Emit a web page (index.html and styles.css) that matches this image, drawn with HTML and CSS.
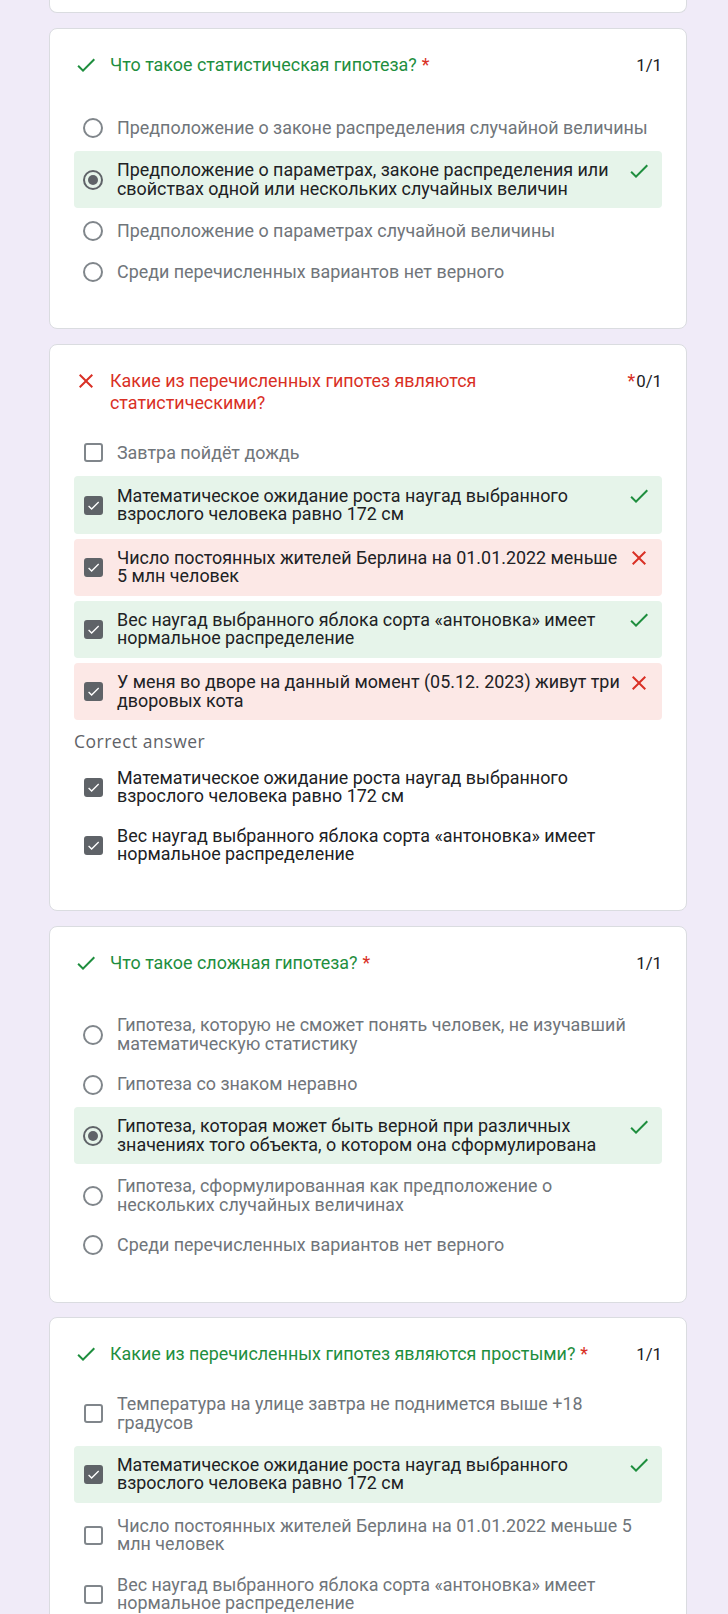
FILE: index.html
```html
<!DOCTYPE html>
<html lang="ru">
<head>
<meta charset="utf-8">
<title>Результаты теста</title>
<link rel="stylesheet" href="styles.css">
</head>
<body>
<main class="page">
  <div class="card card-stub"></div>

  <section class="card">
    <header class="q-head">
      <svg class="q-icon ok" viewBox="0 0 24 24"><path d="M9 16.17L4.83 12l-1.42 1.41L9 19 21 7l-1.41-1.41z"/></svg>
      <div class="q-title ok">Что такое статистическая гипотеза?</div>
      <span class="req">*</span>
      <span class="score">1/1</span>
    </header>
    <ul class="opts radio-list">
      <li class="opt"><span class="ctl"><span class="radio"></span></span><span class="txt">Предположение о законе распределения случайной величины</span></li>
      <li class="opt chosen good"><span class="ctl"><span class="radio on"></span></span><span class="txt">Предположение о параметрах, законе распределения или свойствах одной или нескольких случайных величин</span><svg class="mark ok" viewBox="0 0 24 24"><path d="M9 16.17L4.83 12l-1.42 1.41L9 19 21 7l-1.41-1.41z"/></svg></li>
      <li class="opt"><span class="ctl"><span class="radio"></span></span><span class="txt">Предположение о параметрах случайной величины</span></li>
      <li class="opt"><span class="ctl"><span class="radio"></span></span><span class="txt">Среди перечисленных вариантов нет верного</span></li>
    </ul>
  </section>

  <section class="card">
    <header class="q-head">
      <svg class="q-icon bad" viewBox="0 0 24 24"><path d="M19 6.41L17.59 5 12 10.59 6.41 5 5 6.41 10.59 12 5 17.59 6.41 19 12 13.41 17.59 19 19 17.59 13.41 12z"/></svg>
      <div class="q-title bad">Какие из перечисленных гипотез являются статистическими?</div>
      <span class="req">*</span>
      <span class="score">0/1</span>
    </header>
    <ul class="opts check-list">
      <li class="opt"><span class="ctl"><span class="cb"></span></span><span class="txt">Завтра пойдёт дождь</span></li>
      <li class="opt chosen good"><span class="ctl"><span class="cb on"><svg viewBox="0 0 24 24"><path d="M9 16.17L4.83 12l-1.42 1.41L9 19 21 7l-1.41-1.41z"/></svg></span></span><span class="txt">Математическое ожидание роста наугад выбранного взрослого человека равно 172 см</span><svg class="mark ok" viewBox="0 0 24 24"><path d="M9 16.17L4.83 12l-1.42 1.41L9 19 21 7l-1.41-1.41z"/></svg></li>
      <li class="opt chosen wrong"><span class="ctl"><span class="cb on"><svg viewBox="0 0 24 24"><path d="M9 16.17L4.83 12l-1.42 1.41L9 19 21 7l-1.41-1.41z"/></svg></span></span><span class="txt">Число постоянных жителей Берлина на 01.01.2022 меньше 5 млн человек</span><svg class="mark bad" viewBox="0 0 24 24"><path d="M19 6.41L17.59 5 12 10.59 6.41 5 5 6.41 10.59 12 5 17.59 6.41 19 12 13.41 17.59 19 19 17.59 13.41 12z"/></svg></li>
      <li class="opt chosen good"><span class="ctl"><span class="cb on"><svg viewBox="0 0 24 24"><path d="M9 16.17L4.83 12l-1.42 1.41L9 19 21 7l-1.41-1.41z"/></svg></span></span><span class="txt">Вес наугад выбранного яблока сорта «антоновка» имеет нормальное распределение</span><svg class="mark ok" viewBox="0 0 24 24"><path d="M9 16.17L4.83 12l-1.42 1.41L9 19 21 7l-1.41-1.41z"/></svg></li>
      <li class="opt chosen wrong"><span class="ctl"><span class="cb on"><svg viewBox="0 0 24 24"><path d="M9 16.17L4.83 12l-1.42 1.41L9 19 21 7l-1.41-1.41z"/></svg></span></span><span class="txt">У меня во дворе на данный момент (05.12. 2023) живут три дворовых кота</span><svg class="mark bad" viewBox="0 0 24 24"><path d="M19 6.41L17.59 5 12 10.59 6.41 5 5 6.41 10.59 12 5 17.59 6.41 19 12 13.41 17.59 19 19 17.59 13.41 12z"/></svg></li>
    </ul>
    <div class="answer-label">Correct answer</div>
    <ul class="opts answer-list">
      <li class="opt chosen"><span class="ctl"><span class="cb on"><svg viewBox="0 0 24 24"><path d="M9 16.17L4.83 12l-1.42 1.41L9 19 21 7l-1.41-1.41z"/></svg></span></span><span class="txt">Математическое ожидание роста наугад выбранного взрослого человека равно 172 см</span></li>
      <li class="opt chosen"><span class="ctl"><span class="cb on"><svg viewBox="0 0 24 24"><path d="M9 16.17L4.83 12l-1.42 1.41L9 19 21 7l-1.41-1.41z"/></svg></span></span><span class="txt">Вес наугад выбранного яблока сорта «антоновка» имеет нормальное распределение</span></li>
    </ul>
  </section>

  <section class="card">
    <header class="q-head">
      <svg class="q-icon ok" viewBox="0 0 24 24"><path d="M9 16.17L4.83 12l-1.42 1.41L9 19 21 7l-1.41-1.41z"/></svg>
      <div class="q-title ok">Что такое сложная гипотеза?</div>
      <span class="req">*</span>
      <span class="score">1/1</span>
    </header>
    <ul class="opts radio-list">
      <li class="opt"><span class="ctl"><span class="radio"></span></span><span class="txt">Гипотеза, которую не сможет понять человек, не изучавший математическую статистику</span></li>
      <li class="opt"><span class="ctl"><span class="radio"></span></span><span class="txt">Гипотеза со знаком неравно</span></li>
      <li class="opt chosen good"><span class="ctl"><span class="radio on"></span></span><span class="txt">Гипотеза, которая может быть верной при различных значениях того объекта, о котором она сформулирована</span><svg class="mark ok" viewBox="0 0 24 24"><path d="M9 16.17L4.83 12l-1.42 1.41L9 19 21 7l-1.41-1.41z"/></svg></li>
      <li class="opt"><span class="ctl"><span class="radio"></span></span><span class="txt">Гипотеза, сформулированная как предположение о нескольких случайных величинах</span></li>
      <li class="opt"><span class="ctl"><span class="radio"></span></span><span class="txt">Среди перечисленных вариантов нет верного</span></li>
    </ul>
  </section>

  <section class="card">
    <header class="q-head">
      <svg class="q-icon ok" viewBox="0 0 24 24"><path d="M9 16.17L4.83 12l-1.42 1.41L9 19 21 7l-1.41-1.41z"/></svg>
      <div class="q-title ok">Какие из перечисленных гипотез являются простыми?</div>
      <span class="req">*</span>
      <span class="score">1/1</span>
    </header>
    <ul class="opts check-list">
      <li class="opt"><span class="ctl"><span class="cb"></span></span><span class="txt">Температура на улице завтра не поднимется выше +18 градусов</span></li>
      <li class="opt chosen good"><span class="ctl"><span class="cb on"><svg viewBox="0 0 24 24"><path d="M9 16.17L4.83 12l-1.42 1.41L9 19 21 7l-1.41-1.41z"/></svg></span></span><span class="txt">Математическое ожидание роста наугад выбранного взрослого человека равно 172 см</span><svg class="mark ok" viewBox="0 0 24 24"><path d="M9 16.17L4.83 12l-1.42 1.41L9 19 21 7l-1.41-1.41z"/></svg></li>
      <li class="opt"><span class="ctl"><span class="cb"></span></span><span class="txt">Число постоянных жителей Берлина на 01.01.2022 меньше 5 млн человек</span></li>
      <li class="opt"><span class="ctl"><span class="cb"></span></span><span class="txt">Вес наугад выбранного яблока сорта «антоновка» имеет нормальное распределение</span></li>
      <li class="opt"><span class="ctl"><span class="cb"></span></span><span class="txt">У меня во дворе на данный момент (05.12. 2023) живут три дворовых кота</span></li>
    </ul>
  </section>
</main>
</body>
</html>
```

FILE: styles.css
```css
* { box-sizing: border-box; }

html, body {
  margin: 0;
  padding: 0;
  background: #f0ebf8;
}

body {
  font-family: Roboto, "Noto Sans", "Liberation Sans", sans-serif;
  color: #202124;
}

.page {
  width: 687px;
  padding: 0 0 40px 49px;
  display: flex;
  flex-direction: column;
  gap: 14.5px;
}

.card {
  background: #fff;
  border: 1px solid #dadce0;
  border-radius: 8px;
  padding: 25px 24px 37.5px;
}

.card-stub {
  height: 13px;
  padding: 0;
  border-top: none;
  border-radius: 0 0 8px 8px;
}

.q-head {
  display: flex;
  align-items: baseline;
}

.q-icon {
  flex: none;
  align-self: flex-start;
  width: 24px;
  height: 24px;
  margin-top: -1px;
  margin-right: 12px;
}

.q-icon.ok, .mark.ok { fill: #1e8e3e; }
.q-icon.bad, .mark.bad { fill: #d93025; }

.q-title {
  flex: 0 1 auto;
  min-width: 0;
  font-size: 17.9px;
  line-height: 22px;
}

.q-title.ok { color: #1e8e3e; }
.q-title.bad { color: #d93025; }

.req {
  flex: none;
  margin-left: 5px;
  color: #d93025;
  font-size: 17.9px;
  line-height: 22px;
}

.score {
  flex: none;
  margin-left: auto;
  padding-left: 1px;
  font-size: 16.8px;
  line-height: 22px;
  font-variant-numeric: tabular-nums;
  color: #202124;
}

.opts {
  list-style: none;
  margin: 0;
  padding: 0;
  display: flex;
  flex-direction: column;
}

.radio-list {
  margin-top: 33.2px;
  gap: 4.1px;
}

.check-list {
  margin-top: 20.5px;
  gap: 5px;
}

.answer-list {
  margin-top: 7px;
  gap: 4px;
}

.opt {
  display: flex;
  align-items: center;
  padding: 8.6px 11px 8.6px 9px;
  border-radius: 4px;
  font-size: 17.9px;
  line-height: 18.5px;
  color: #70757a;
}

.opt.chosen { color: #202124; }

.opt.good,
.opt.wrong {
  padding-top: 10.1px;
  padding-bottom: 10.1px;
}

.opt.good { background: #e6f4ea; }
.opt.wrong { background: #fce8e6; }

.ctl {
  flex: none;
  width: 20px;
  height: 20px;
  margin-right: 14px;
  display: flex;
  align-items: center;
  justify-content: center;
}

.txt {
  flex: 1 1 auto;
  min-width: 0;
}

.mark {
  flex: none;
  align-self: flex-start;
  width: 24px;
  height: 24px;
  margin-top: -2.5px;
  margin-left: 4px;
}

.radio {
  width: 20px;
  height: 20px;
  border: 2px solid #80868b;
  border-radius: 50%;
  display: flex;
  align-items: center;
  justify-content: center;
}

.radio.on { border-color: #5f6368; }
.radio.on::after {
  content: "";
  width: 10px;
  height: 10px;
  border-radius: 50%;
  background: #5f6368;
}

.cb {
  width: 19px;
  height: 19px;
  border: 2px solid #80868b;
  border-radius: 3px;
  display: flex;
  align-items: center;
  justify-content: center;
}

.cb.on {
  background: #5f6368;
  border-color: #5f6368;
}

.cb svg {
  width: 17px;
  height: 17px;
  fill: #fff;
}

.answer-label {
  margin-top: 9px;
  font-family: "Open Sans", Roboto, sans-serif;
  font-size: 17.5px;
  line-height: 24px;
  font-weight: 500;
  letter-spacing: 0.5px;
  color: #5f6368;
}
```
